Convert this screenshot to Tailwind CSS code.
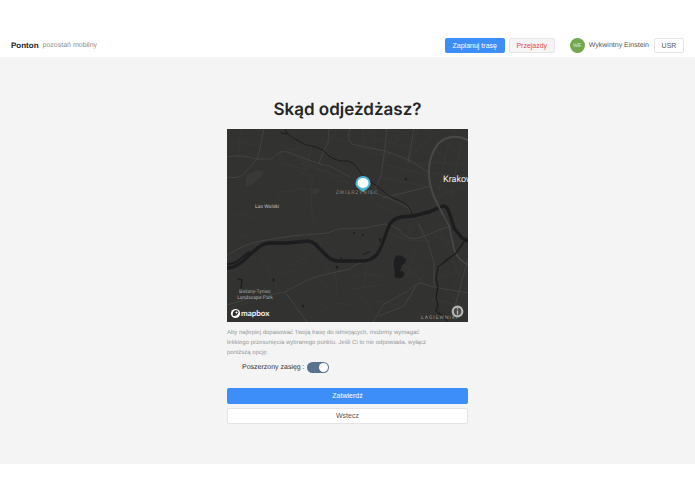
<!DOCTYPE html>
<html lang="pl">
<head>
  <meta charset="UTF-8">
  <meta name="viewport" content="width=device-width, initial-scale=1.0">
  <title>Ponton</title>
  <script src="https://cdn.jsdelivr.net/npm/@tailwindcss/browser@4"></script>
</head>
<body class="bg-white font-['Liberation_Sans',sans-serif] text-[7px] leading-[10px] text-[#555] antialiased [text-rendering:geometricPrecision]">
  <header class="flex items-center justify-between px-[11px] pt-[38px] pb-1">
    <div class="flex items-center gap-1">
      <a href="#" class="text-[8px] font-bold text-[#222]">Ponton</a>
      <span class="text-[#8c8c8c]">pozostań mobilny</span>
    </div>
    <nav class="flex items-center">
      <button class="h-[15px] w-[60px] rounded-[2px] bg-[#3d8ef8] text-white">Zaplanuj trasę</button>
      <button class="ml-1 h-[15px] w-[46px] rounded-[2px] border border-[#e6e6e6] bg-[#f5f5f5] text-[#e5484d]">Przejazdy</button>
      <span class="ml-[15px] flex size-[15px] items-center justify-center rounded-full bg-[#72a84b] text-[5px] text-white/80">WE</span>
      <span class="ml-1">Wykwintny Einstein</span>
      <button class="ml-[5px] h-[15px] w-[30px] rounded-[2px] border border-[#e4e4e4] bg-white">USR</button>
    </nav>
  </header>

  <main class="bg-[#f4f4f4] pt-[41px] pb-10">
    <div class="mx-auto w-[241px]">
      <h1 class="text-center font-['Inter','Liberation_Sans',sans-serif] text-[17px] leading-6 font-semibold whitespace-nowrap text-[#262626]">Skąd odjeżdżasz?</h1>

      <!-- Mapa -->
      <svg class="mt-[7px] block w-full" viewBox="0 0 241 193" role="img" aria-label="Mapa" fill="none" stroke-linejoin="round" stroke-linecap="round">
        <rect width="241" height="193" fill="#323231"/>
        <path d="M20 46l10-5 7 1-3 6-10 8-6 2zM85 60l7-1v5l-6 2z" fill="#393938"/>

        <!-- drobne ulice -->
        <g stroke="#3b3b3a" stroke-width=".6">
          <path d="M0 10l35 8M14 0l-3 28M50 12l12 9 16-3M54 21l-2 12 28 8M60 23l38 20M66 0l6 24M75 28l3 12M83 22l-4 20M72 34l45 15M48 72l6-9 12-1 8-3 11 2M70 42l16 6-2 12 1 24 4 12 10 8M100 40l4 9 18 5M110 0l-8 14M112 10l12 3M0 88l14-4 18 6M0 115l12-7 14-2"/>
          <path d="M128 18l12 2 10 6 12-2 18 8 20 4M135 0l4 16M146 2l2 18M158 0l24 17M172 0l-4 14M150 10l40 11M165 8l-9 28M176 3l38 30M190 0l-8 34M200 0l24 10M208 4l-25 23M229 0l-7 14M213 9l26 22M208 19l20 25M203 33l38 3M202 44l37 3M202 54l28 12M220 18l-8 44M234 14l-10 54M241 57l-32 11M214 68l-12 12M160 36l40 10M152 48l50 10M158 56l27 24M140 60l10 16 20 8"/>
          <path d="M4 126l12-10 20-1M34 128l8 14 7 14 3 9M60 138l15-8 11-16 6-5 2 8-18 13M54 145l16-4 11-12M0 180l25-7M98 136l10 12M108 140l2 23M90 148l20 18M70 182l20 8M92 184l15-10 16 2M120 150l16-6 20 4M124 160l30-4M140 138l-4 20M132 164l12 16M150 172l24 5M166 178l25-14M160 103l18 8 26 1M170 98l6 12M186 94l-9 20M190 116l-10 30M196 138l-20 12M200 140l-16 26M211 120l15 14M209 108l24 6M204 130l-20-6M208 150l22-8M214 158l22 20M206 170l30 8M196 180l10-10M237 130l-10 32M220 96l-15 14M170 130l30 26M212 98l22 52"/>
        </g>

        <!-- główne drogi -->
        <g stroke="#464645" stroke-width=".8">
          <path d="M37 0l-6 28-2 3-13 15Q10 50 0 48M0 28q14-3 29 2l16 0 5-5q5-4 11-2l18 7 14 5 12 3 18 10M92 35l4-12 5-9 1-14M123 0q-4 10 2 15l18 4 15 3 17 6 9 4 18 12M160 0l-3 26-3 21-6 13M187 0l-4 22-2 12M156 69l48-12M132 58l14 5 20 8 14 7 5 6"/>
          <path d="M0 126q18-11 33-14l32-5 35-3 12-4 26-1 20-4M0 176l20-6 38-7q20-12 34-16l31-7q6-6 16-7 10-3 13-13l8-22M58 163l22 30M158 95q12 2 18 10 6 6 16 4l20-8 12-4M191 94l10 20 6 20v23M146 193l11-18 24-13q6-7 12-8l14 4 34 6M152 187l25-10 12-20M241 130l-14 51"/>
        </g>
        <path d="M241 11q-18-8-30 4-10 12-9 32 1 12 6 23l14 27 5 23q3 10 14 16" stroke="#484848" stroke-width="1.600"/>
        <path d="M241 11q-18-8-30 4-10 12-9 32 1 12 6 23" stroke="#484848" stroke-width="2"/>

        <!-- Wisła i dopływy -->
        <g stroke="#1c1d1e">
          <path d="M0 139q8 0 16-7l11-10q7-7 15-8l18 0 21-2q6 1 10 6l9 9q5 5 12 5l25 0q12-1 17-14l7-19q3-9 13-11l12-1 16-4 14-6q4 0 6 6l5 16 8 10 7 3" stroke-width="3.400"/>
          <path d="M0 135q8 0 13-5l9-7" stroke-width="1.800"/>
          <path d="M58 0q2 6 10 10 10 7 21 8 8 2 12 8 8 7 20 6 7 2 10 8 6 10 19 17l12 10 11 5q10 3 12 14M54 4l6 1" stroke-width="1"/>
          <path d="M239 110l-10 14-18 14q-1 7-2 12l2 8-2 10 2 8-2 6 8 6 3 4M217 133l5-4M11 150l4 1-1 9M137 125l5-2" stroke-width="1.300"/>
        </g>
        <path d="M208 70l7 14" stroke="#484848" stroke-width="1.800"/>
        <path d="M169 127q5-2 7 1l3 2q0 4-4 6l-2 6q5 0 4 4-2 4-7 3-4-1-2-6l-1-4q-1-8 2-12z" fill="#1d1e1f"/>
        <g fill="#1d1e1f">
          <circle cx="179" cy="50" r="1.300"/>
          <circle cx="110" cy="138" r="1.500"/>
          <circle cx="114" cy="129" r="1"/>
          <circle cx="76" cy="177" r="1.300"/>
          <circle cx="127" cy="104" r="1"/>
          <circle cx="136" cy="106" r="1"/>
          <ellipse cx="46.500" cy="151" rx="1" ry="2"/>
          <ellipse cx="153" cy="111" rx="1" ry="2"/>
        </g>

        <!-- etykiety -->
        <g class="font-['Roboto','Noto_Sans',sans-serif]" text-anchor="middle">
          <text x="130" y="65" class="tracking-[1px]" font-size="5" fill="#888">ZWIERZYNIEC</text>
          <text x="40" y="79" font-size="5" fill="#c4c4c4">Las Wolski</text>
          <text x="28" y="164" font-size="5" fill="#a8a8a8">Bielany-Tyniec</text>
          <text x="28" y="170" font-size="5" fill="#a8a8a8">Landscape Park</text>
          <text x="216" y="53" font-size="9" fill="#f0f0f0" text-anchor="start">Krakow</text>
          <text x="194" y="190" class="tracking-[1px]" font-size="5" fill="#999" text-anchor="start">ŁAGIEWNIKI</text>
        </g>

        <!-- pinezka -->
        <path d="M136 63l-4-3q-4-3-3.500-6a7.500 7 0 0 1 15 0q.5 3-3.500 6z" fill="#4ab5d5"/>
        <ellipse cx="136" cy="54" rx="5.500" ry="5" fill="#fff"/>

        <!-- logo mapbox -->
        <circle cx="8.500" cy="184.500" r="4.600" fill="#fff"/>
        <path d="M6 187q-1-4 1.500-5.500a2.500 2.500 0 0 1 3.500 3.500q-1.500 2.500-5 2z" fill="#323231"/>
        <path d="M9.500 182l.5 1 1 .5-1 .5-.5 1-.5-1-1-.5 1-.5z" fill="#fff"/>
        <text x="14" y="187" class="font-['Lato',sans-serif]" font-size="8" font-weight="700" fill="#f2f2f2">mapbox</text>

        <!-- informacje o mapie -->
        <circle cx="230.500" cy="182.500" r="4.800" fill="#4a4a49" stroke="#b5b5b5" stroke-width="2.200"/>
        <path d="M230.500 182v3" stroke="#b5b5b5" stroke-width="1.300"/>
        <circle cx="230.500" cy="179.800" r=".8" fill="#b5b5b5"/>
      </svg>

      <p class="mt-[6px] w-[200px] text-[6px] text-[#999]">Aby najlepiej dopasować Twoją trasę do istniejących, możemy wymagać lekkiego przesunięcia wybranego punktu. Jeśli Ci to nie odpowiada, wyłącz poniższą opcję.</p>

      <div class="mt-1 flex items-center gap-[3px] pl-[15px] text-[#333]">
        <label for="zasieg">Poszerzony zasięg&thinsp;:</label>
        <input id="zasieg" type="checkbox" role="switch" checked class="h-[11px] w-[22px] appearance-none rounded-full bg-[#8c8c8c] before:mt-px before:ml-px before:block before:size-[9px] before:rounded-full before:bg-white checked:bg-[#58728f] checked:before:ml-3">
      </div>

      <button class="mt-[15px] block h-4 w-full rounded-[2px] bg-[#3d8ef8] text-white">Zatwierdź</button>
      <button class="mt-1 block h-4 w-full rounded-[2px] border border-[#e4e4e4] bg-white">Wstecz</button>
    </div>
  </main>
</body>
</html>
